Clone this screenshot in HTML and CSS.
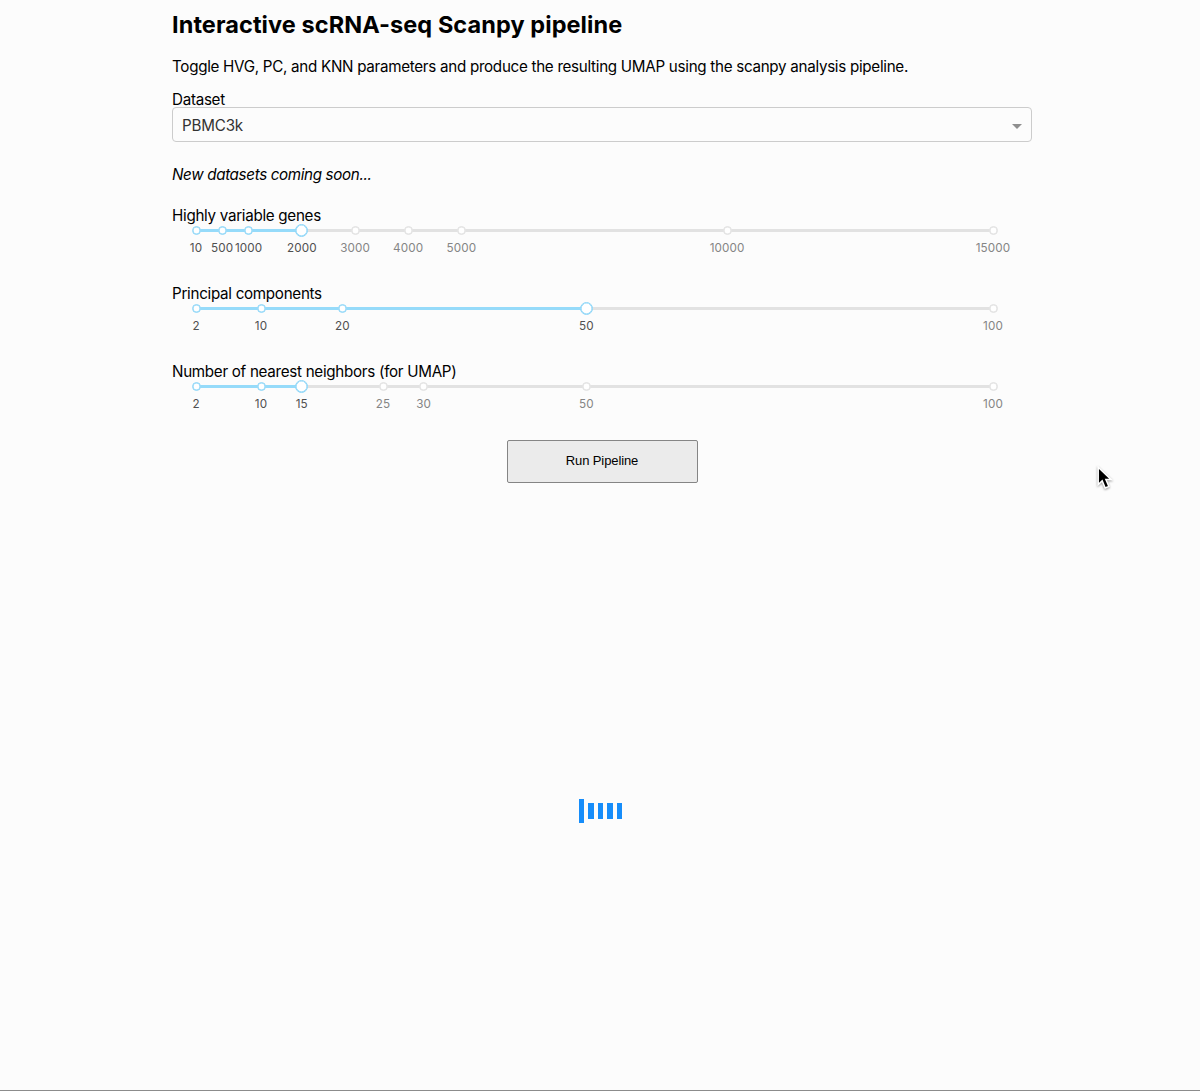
FILE: index.html
```html
<!DOCTYPE html>
<html lang="en">
<head>
<meta charset="utf-8">
<title>Interactive scRNA-seq Scanpy pipeline</title>
<link rel="stylesheet" href="styles.css">
</head>
<body>
<main class="page">
  <h1 class="title">Interactive scRNA-seq Scanpy pipeline</h1>
  <p class="intro">Toggle HVG, PC, and KNN parameters and produce the resulting UMAP using the scanpy analysis pipeline.</p>
  <div class="label" id="dataset-label">Dataset</div>
  <div class="select" role="combobox" aria-labelledby="dataset-label" aria-expanded="false">
    <span class="select-value">PBMC3k</span>
    <span class="select-arrow"></span>
  </div>
  <p class="note">New datasets coming soon...</p>

  <section class="field">
    <div class="label">Highly variable genes</div>
    <div class="slider">
      <div class="rail"><div class="track" style="width:13.28%"></div></div>
      <div class="mark on" style="left:0%"><i class="dot"></i><span>10</span></div>
      <div class="mark on" style="left:3.27%"><i class="dot"></i><span>500</span></div>
      <div class="mark on" style="left:6.6%"><i class="dot"></i><span>1000</span></div>
      <div class="mark on current" style="left:13.28%"><i class="dot"></i><span>2000</span></div>
      <div class="mark" style="left:19.95%"><i class="dot"></i><span>3000</span></div>
      <div class="mark" style="left:26.62%"><i class="dot"></i><span>4000</span></div>
      <div class="mark" style="left:33.29%"><i class="dot"></i><span>5000</span></div>
      <div class="mark" style="left:66.64%"><i class="dot"></i><span>10000</span></div>
      <div class="mark" style="left:100%"><i class="dot"></i><span>15000</span></div>
    </div>
  </section>

  <section class="field">
    <div class="label">Principal components</div>
    <div class="slider">
      <div class="rail"><div class="track" style="width:48.98%"></div></div>
      <div class="mark on" style="left:0%"><i class="dot"></i><span>2</span></div>
      <div class="mark on" style="left:8.16%"><i class="dot"></i><span>10</span></div>
      <div class="mark on" style="left:18.37%"><i class="dot"></i><span>20</span></div>
      <div class="mark on current" style="left:48.98%"><i class="dot"></i><span>50</span></div>
      <div class="mark" style="left:100%"><i class="dot"></i><span>100</span></div>
    </div>
  </section>

  <section class="field">
    <div class="label">Number of nearest neighbors (for UMAP)</div>
    <div class="slider">
      <div class="rail"><div class="track" style="width:13.27%"></div></div>
      <div class="mark on" style="left:0%"><i class="dot"></i><span>2</span></div>
      <div class="mark on" style="left:8.16%"><i class="dot"></i><span>10</span></div>
      <div class="mark on current" style="left:13.27%"><i class="dot"></i><span>15</span></div>
      <div class="mark" style="left:23.47%"><i class="dot"></i><span>25</span></div>
      <div class="mark" style="left:28.57%"><i class="dot"></i><span>30</span></div>
      <div class="mark" style="left:48.98%"><i class="dot"></i><span>50</span></div>
      <div class="mark" style="left:100%"><i class="dot"></i><span>100</span></div>
    </div>
  </section>

  <button class="run" type="button">Run Pipeline</button>

  <div class="loader">
    <i class="bar tall"></i><i class="bar"></i><i class="bar"></i><i class="bar"></i><i class="bar"></i>
  </div>
</main>
<svg class="cursor" viewBox="0 0 20 28" width="20" height="28" aria-hidden="true">
  <path d="M2.2 2.2V19.6L6.2 15.9L9.2 23L12.9 21.4L9.9 14.6H15.2Z" fill="#000" stroke="#fff" stroke-width="1.5"/>
</svg>
</body>
</html>
```

FILE: styles.css
```css
* {
  box-sizing: border-box;
}

body {
  margin: 0;
  height: 1091px;
  overflow: hidden;
  background: #fcfcfc;
  border-bottom: 1px solid #8c8c8c;
  color: #000;
  font: 15.2px/20px Inter, "Liberation Sans", sans-serif;
  letter-spacing: -0.295px;
}

.page {
  width: 860px;
  margin-left: 172px;
  padding-top: 10px;
  display: flex;
  flex-direction: column;
}

.title {
  margin: 0;
  font-size: 23.5px;
  line-height: 30px;
  font-weight: 700;
  letter-spacing: 0.08px;
  white-space: nowrap;
}

.intro {
  margin: 17px 0 0;
  white-space: nowrap;
}

.label {
  height: 18px;
  line-height: 20px;
  white-space: nowrap;
}

.intro + .label {
  margin-top: 13px;
  height: 17px;
}

.select {
  height: 35px;
  display: flex;
  align-items: center;
  justify-content: space-between;
  padding: 2px 9px 0 9px;
  border: 1px solid #ccc;
  border-radius: 4px;
  color: #333;
  letter-spacing: -0.2px;
}

.select-arrow {
  border: 5px solid transparent;
  border-top-color: #8f8f8f;
  border-bottom-width: 0;
  margin-top: 2px;
}

.note {
  margin: 23px 0 21px;
  height: 20px;
  letter-spacing: -0.35px;
  font-style: italic;
}

.field {
  height: 78px;
}

.slider {
  position: relative;
  height: 32px;
  margin: 3px 39px 0 24px;
}

.field .label {
  height: 20px;
}

.rail {
  height: 3px;
  border-radius: 2px;
  background: #e2e2e2;
}

.track {
  height: 3px;
  border-radius: 2px;
  background: #96dbfa;
}

.mark {
  position: absolute;
  top: -6px;
  width: 51px;
  margin-left: -25.5px;
  display: flex;
  flex-direction: column;
  align-items: center;
  color: #858585;
  font-size: 11.7px;
  line-height: 16px;
  letter-spacing: 0.1px;
}

.mark.on {
  color: #505050;
}

.dot {
  width: 9px;
  height: 9px;
  margin: 3px 0 5px;
  border: 1px solid #e0e0e0;
  border-radius: 50%;
  background: #fff;
  box-shadow: inset 0 0 0 0.6px #e0e0e0;
}

.on .dot {
  border-color: #8ad5f8;
  box-shadow: inset 0 0 0 0.6px #8ad5f8;
}

.current .dot {
  width: 13px;
  height: 13px;
  margin: 1px 0 3px;
}

.run {
  align-self: center;
  width: 191px;
  height: 43px;
  margin: 0;
  padding: 0 6px 1px;
  border: 1px solid #858585;
  border-radius: 2px;
  background: #ebebeb;
  color: #000;
  font: 13px/16px "Liberation Sans", Arial, sans-serif;
  letter-spacing: -0.1px;
}

.loader {
  align-self: center;
  display: flex;
  align-items: center;
  gap: 4px;
  height: 24px;
  margin: 316px 3px 0 0;
}

.bar {
  width: 5.6px;
  height: 16px;
  background: #168dfa;
}

.bar.tall {
  height: 24px;
}

.cursor {
  position: absolute;
  left: 1096px;
  top: 465px;
  filter: drop-shadow(0 1px 1px rgba(0, 0, 0, 0.4));
}
```
